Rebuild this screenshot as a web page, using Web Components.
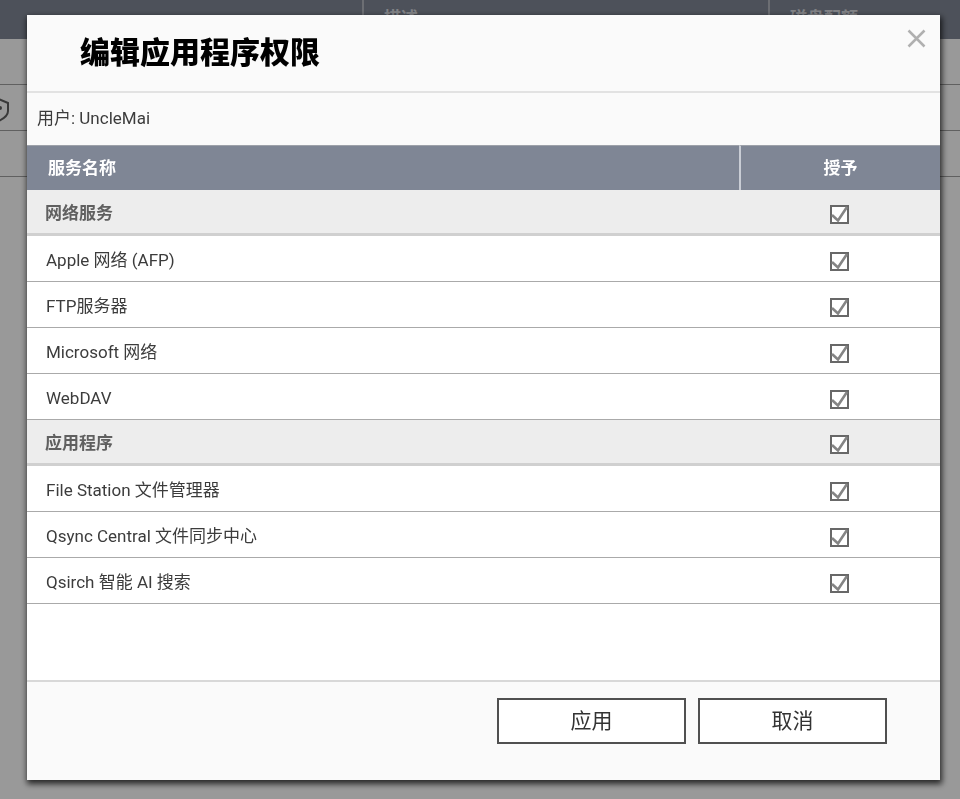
<!DOCTYPE html>
<html lang="zh-CN">
<head>
<meta charset="utf-8">
<meta name="viewport" content="width=device-width, initial-scale=1">
<title>编辑应用程序权限</title>
<style>
  body {
    margin: 0;
    font-family: Roboto, "Noto Sans CJK SC", sans-serif;
    font-size: 17px;
    line-height: 24px;
    color: #3c3c3c;
  }
</style>
</head>
<body>
<user-list></user-list>
<app-modal>
  <span slot="title">编辑应用程序权限</span>
  <span slot="info">用户: UncleMai</span>
  <permission-table></permission-table>
  <app-button slot="actions">应用</app-button>
  <app-button slot="actions">取消</app-button>
</app-modal>

<script>
// user table behind the dialog
class UserList extends HTMLElement {
  constructor() {
    super();
    this.attachShadow({ mode: "open" });
  }

  connectedCallback() {
    this.shadowRoot.innerHTML = `
      <style>
        :host {
          display: block;
          min-height: 100vh;
          background: #fff;
        }
        table {
          width: 100%;
          table-layout: fixed;
          border-collapse: separate;
          border-spacing: 0;
        }
        th {
          box-sizing: border-box;
          height: 39px;
          padding: 0 20px 4px;
          text-align: left;
          font-weight: 700;
          color: #d8dae0;
          background: #818896;
          border-left: 2px solid #b4b8c0;
        }
        th:first-child {
          width: 362px;
          border-left: 0;
        }
        th:last-child {
          width: 192px;
        }
        td {
          box-sizing: border-box;
          height: 46px;
          padding: 0;
          border-bottom: 1px solid #a0a0a0;
        }
        svg {
          display: block;
        }
        .shield {
          padding-top: 4px;
        }
      </style>
      <table>
        <thead>
          <tr><th></th><th>描述</th><th>磁盘配额</th></tr>
        </thead>
        <tbody>
          <tr><td colspan="3"></td></tr>
          <tr><td class="shield" colspan="3">
            <svg width="10" height="28" viewBox="0 0 10 28" fill="none" stroke="#606060" stroke-width="2" aria-hidden="true">
              <path d="M-4 2 L8 7 V15 C8 20 4 23 -4 26"/>
              <circle cx="0" cy="12" r="2" fill="#606060" stroke="none"/>
            </svg>
          </td></tr>
          <tr><td colspan="3"></td></tr>
        </tbody>
      </table>
    `;
  }
}

class AppModal extends HTMLElement {
  constructor() {
    super();
    this.attachShadow({ mode: "open" });
  }

  connectedCallback() {
    this.shadowRoot.innerHTML = `
      <style>
        :host {
          position: fixed;
          inset: 0;
          box-sizing: border-box;
          display: flex;
          padding: 15px 20px 19px 27px;
          background: rgba(0, 0, 0, 0.4);
        }
        :host([hidden]) {
          display: none;
        }
        .modal {
          flex: 1;
          display: flex;
          flex-direction: column;
          min-width: 0;
          background: #fafafa;
          box-shadow: 1px 3px 6px 1px rgba(0, 0, 0, 0.75);
        }
        header {
          display: flex;
          justify-content: space-between;
          align-items: flex-start;
          padding: 13px 12px 14px 53px;
          border-bottom: 2px solid #e2e2e2;
        }
        h1 {
          margin: 0;
          font-size: 30px;
          line-height: 49px;
          font-weight: 900;
          color: #000;
        }
        .close {
          display: flex;
          padding: 0;
          border: 0;
          background: none;
          cursor: pointer;
        }
        .info {
          padding: 13px 10px 15px;
        }
        .content {
          flex: 1;
          min-height: 0;
          overflow: auto;
          background: #fff;
        }
        footer {
          display: flex;
          justify-content: flex-end;
          gap: 12px;
          padding: 16px 53px 36px;
          border-top: 2px solid #d8d8d8;
        }
      </style>
      <div class="modal" role="dialog" aria-modal="true" aria-labelledby="title">
        <header>
          <h1 id="title"><slot name="title"></slot></h1>
          <button class="close" type="button" aria-label="关闭">
            <svg width="22" height="22" viewBox="0 0 22 22" fill="none" stroke="#b0b0b0" stroke-width="2.5">
              <path d="M2.5 2.5 L18.5 18.5 M18.5 2.5 L2.5 18.5"/>
            </svg>
          </button>
        </header>
        <div class="info"><slot name="info"></slot></div>
        <div class="content"><slot></slot></div>
        <footer><slot name="actions"></slot></footer>
      </div>
    `;

    this.shadowRoot
      .querySelector(".close")
      .addEventListener("click", () => (this.hidden = true));
  }
}

class AppButton extends HTMLElement {
  constructor() {
    super();
    this.attachShadow({ mode: "open" });
  }

  connectedCallback() {
    this.shadowRoot.innerHTML = `
      <style>
        :host {
          display: block;
        }
        button {
          min-width: 189px;
          height: 46px;
          padding: 0 20px;
          border: 2px solid #505050;
          background: #fff;
          color: #333;
          font: inherit;
          font-size: 21px;
          cursor: pointer;
        }
      </style>
      <button type="button"><slot></slot></button>
    `;
  }
}

const groups = [
  {
    name: "网络服务",
    services: ["Apple 网络 (AFP)", "FTP服务器", "Microsoft 网络", "WebDAV"],
  },
  {
    name: "应用程序",
    services: ["File Station 文件管理器", "Qsync Central 文件同步中心", "Qsirch 智能 AI 搜索"],
  },
];

class PermissionTable extends HTMLElement {
  constructor() {
    super();
    this.attachShadow({ mode: "open" });
  }

  connectedCallback() {
    this.render();

    // a group's box switches all of its services
    this.shadowRoot.addEventListener("change", (e) => {
      const body = e.target.closest("tbody");
      const boxes = [...body.querySelectorAll("input")];
      const [all, ...rest] = boxes;
      if (e.target === all) {
        rest.forEach((box) => (box.checked = all.checked));
      } else {
        all.checked = rest.every((box) => box.checked);
      }
    });
  }

  row(name, id, className = "") {
    return `
      <tr class="${className}">
        <td><label for="${id}">${name}</label></td>
        <td>
          <span class="check">
            <input type="checkbox" id="${id}" checked>
            <svg viewBox="0 0 19 19" fill="none" stroke="#858585" stroke-width="2.6" aria-hidden="true">
              <path d="M2 10 L8 15.5 L17 2"/>
            </svg>
          </span>
        </td>
      </tr>
    `;
  }

  render() {
    this.shadowRoot.innerHTML = `
      <style>
        :host {
          display: block;
        }
        table {
          width: 100%;
          table-layout: fixed;
          border-collapse: separate;
          border-spacing: 0;
        }
        th, td {
          box-sizing: border-box;
          padding: 0 19px;
          text-align: left;
        }
        th {
          height: 45px;
          padding-left: 21px;
          font-weight: 700;
          color: #fff;
          background: #7f8695;
          border-top: 1px solid #9da1a9;
        }
        th:last-child {
          width: 201px;
          border-left: 2px solid #c9cdd5;
        }
        th:last-child, td:last-child {
          padding-left: 0;
          padding-right: 0;
          text-align: center;
        }
        td {
          height: 46px;
          padding-top: 2px;
          border-bottom: 1px solid #aaa;
        }
        .group td {
          background: #ededed;
          border-bottom: 3px solid #d0d0d0;
          font-weight: 700;
          color: #606060;
        }
        .group td:first-child {
          padding-left: 18px;
        }
        .check {
          display: inline-grid;
          vertical-align: middle;
        }
        .check > * {
          grid-area: 1 / 1;
          box-sizing: border-box;
          width: 19px;
          height: 19px;
          margin: 0;
        }
        input {
          appearance: none;
          border: 2px solid #686868;
          background: #fff;
        }
        svg {
          pointer-events: none;
        }
        input:not(:checked) + svg {
          visibility: hidden;
        }
      </style>
      <table>
        <thead>
          <tr><th>服务名称</th><th>授予</th></tr>
        </thead>
        ${groups
          .map(
            (group, i) => `
          <tbody>
            ${this.row(group.name, `group-${i}`, "group")}
            ${group.services.map((name, j) => this.row(name, `service-${i}-${j}`)).join("")}
          </tbody>`
          )
          .join("")}
      </table>
    `;
  }
}

customElements.define("user-list", UserList);
customElements.define("app-modal", AppModal);
customElements.define("app-button", AppButton);
customElements.define("permission-table", PermissionTable);
</script>
</body>
</html>
